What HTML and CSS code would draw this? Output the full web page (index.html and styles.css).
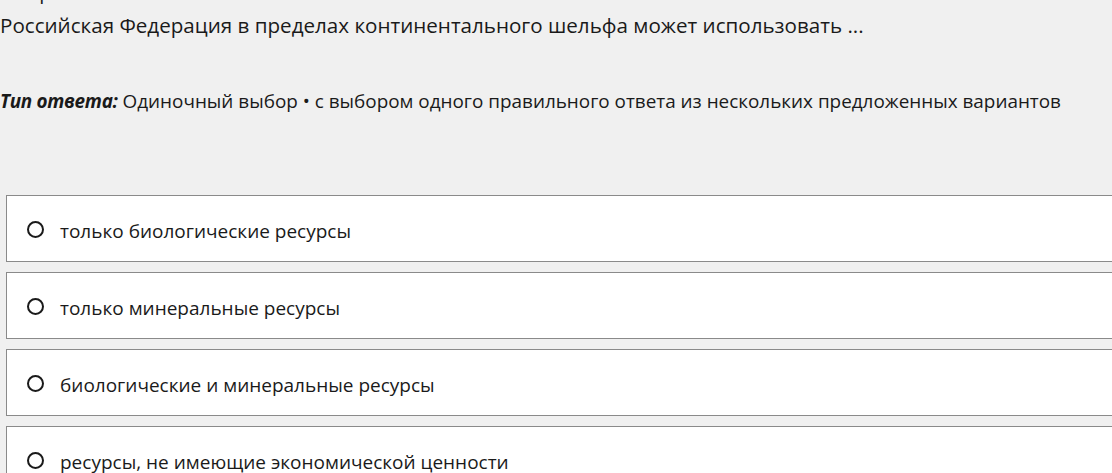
FILE: index.html
```html
<!DOCTYPE html>
<html lang="ru">
<head>
    <meta charset="UTF-8">
    <title>Вопрос</title>
    <link rel="stylesheet" href="styles.css">
</head>
<body>
    <div class="question">
        <div class="question-num">Вопрос 4</div>
        <div class="question-text">Российская Федерация в пределах континентального шельфа может использовать ...</div>
        <div class="answer-type"><em>Тип ответа:</em> Одиночный выбор • с выбором одного правильного ответа из нескольких предложенных вариантов</div>
    </div>

    <div class="options">
        <label class="option">
            <span class="radio"></span>
            <span class="option-text">только биологические ресурсы</span>
        </label>
        <label class="option">
            <span class="radio"></span>
            <span class="option-text">только минеральные ресурсы</span>
        </label>
        <label class="option">
            <span class="radio"></span>
            <span class="option-text">биологические и минеральные ресурсы</span>
        </label>
        <label class="option">
            <span class="radio"></span>
            <span class="option-text">ресурсы, не имеющие экономической ценности</span>
        </label>
    </div>
</body>
</html>
```

FILE: styles.css
```css
* { box-sizing: border-box; }

html, body {
    width: 100%;
    height: 100%;
}

body {
    margin: 0;
    padding: 0;
    background: #f0f0f0;
    color: #1a1a1a;
    font-family: "Open Sans", "Noto Sans", sans-serif;
    overflow: hidden;
}

.question {
    margin-top: -20px;
}

.question-num {
    font-size: 20px;
    line-height: 24px;
    padding-left: 2px;
}

.question-text {
    font-size: 20.6px;
    line-height: 28px;
    margin-top: 7px;
}

.answer-type {
    font-size: 18.9px;
    line-height: 26px;
    margin-top: 49px;
}

.answer-type em {
    font-weight: 700;
    font-style: italic;
    letter-spacing: -0.3px;
}

.options {
    display: flex;
    flex-direction: column;
    gap: 10px;
    width: 1200px;
    margin-top: 81px;
    padding-left: 6px;
}

.option {
    display: flex;
    align-items: center;
    gap: 16px;
    height: 67px;
    padding: 4px 0 0 20px;
    background: #fff;
    border: 1px solid #8a8a8a;
    cursor: pointer;
}

.radio {
    width: 17px;
    height: 17px;
    border: 2px solid #1a1a1a;
    border-radius: 50%;
    margin-top: -3px;
    flex-shrink: 0;
}

.option-text {
    font-size: 19px;
}
```
